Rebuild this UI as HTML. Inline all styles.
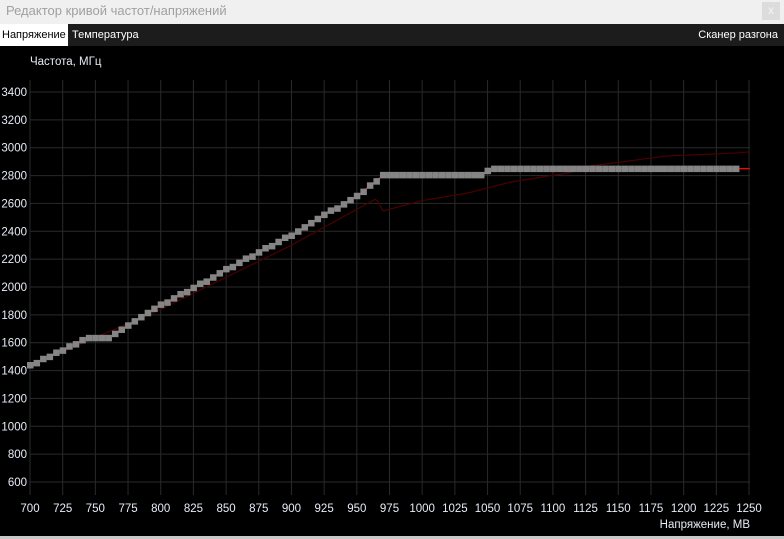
<!DOCTYPE html>
<html><head><meta charset="utf-8"><style>
body{margin:0;width:784px;height:539px;overflow:hidden;background:#000;font-family:"Liberation Sans",sans-serif;position:relative}
.title{position:absolute;left:0;top:0;width:784px;height:24px;background:#f0f0f0;color:#a0a0a0;font-size:13px;line-height:22px;padding-left:6px;box-sizing:border-box}
.close{position:absolute;left:762px;top:2px;width:18px;height:18px;background:#dcdcdc;color:#f4f4f4;font-size:12px;text-align:center;line-height:17px}
.tabs{position:absolute;left:0;top:24px;width:784px;height:22px;background:#1c1c1c;color:#fff;font-size:11px;line-height:22px}
.tab1{position:absolute;left:0;top:0;width:68px;height:22px;background:#fff;color:#000;padding-left:2px;box-sizing:border-box;white-space:nowrap;overflow:hidden}
.tab2{position:absolute;left:72px}
.tab3{position:absolute;right:6px}
svg{position:absolute;left:0;top:46px}
svg text{font-family:"Liberation Sans",sans-serif;font-size:11.5px;fill:#e6ecf5}
</style></head><body>
<div class="title">Редактор кривой частот/напряжений</div>
<div class="close">x</div>
<div class="tabs"><div class="tab1">Напряжение</div><div class="tab2">Температура</div><div class="tab3">Сканер разгона</div></div>
<svg id="s" width="784" height="493" viewBox="0 46 784 493">
<text x="30" y="65">Частота, МГц</text>
<text x="750" y="528" text-anchor="end">Напряжение, МВ</text>
<g id="g"></g>
</svg>
<script>
var g=document.getElementById('g'),h='';
function X(v){return 30+(v-700)*719/550}
function Y(f){return 92+(3400-f)/200*27.857}
for(var f=600;f<=3400;f+=200){var y=Y(f);h+='<line x1="30" x2="750" y1="'+y+'" y2="'+y+'" stroke="#2a2a2a"/>';h+='<text x="27" y="'+(y+4)+'" text-anchor="end">'+f+'</text>';}
for(var v=700;v<=1250;v+=25){var x=X(v);h+='<line x1="'+x+'" x2="'+x+'" y1="80" y2="495" stroke="#2a2a2a"/>';h+='<text x="'+x+'" y="512" text-anchor="middle">'+v+'</text>';}
function interp(p,v){for(var i=0;i<p.length-1;i++){if(v<=p[i+1][0]){var t=(v-p[i][0])/(p[i+1][0]-p[i][0]);return p[i][1]+t*(p[i+1][1]-p[i][1]);}}return p[p.length-1][1]}
var dk=[[700,1435],[800,1840],[900,2300],[965,2635],[970,2546],[1000,2620],[1035,2675],[1068,2754],[1112,2819],[1128,2869],[1152,2897],[1186,2940],[1240,2962],[1250,2970]];
var pd='';for(var v=700;v<=1250;v+=2){pd+=(v==700?'M':'L')+X(v).toFixed(1)+' '+Y(interp(dk,v)).toFixed(1)}
h+='<path d="'+pd+'" stroke="#4a0000" fill="none" stroke-width="1.2"/>';
var cp=[[700,1440],[745,1635],[760,1640],[800,1870],[900,2375],[950,2655],[970,2800],[1045,2805],[1050,2830],[1055,2850],[1250,2850]];
var pts=[];for(var v=700;v<=1240;v+=5){var f=Math.round(interp(cp,v)/15)*15;pts.push([X(v),Y(f)])}
var pl='';pts.forEach(function(p,i){pl+=(i?'L':'M')+p[0].toFixed(1)+' '+p[1].toFixed(1)});
h+='<path d="'+pl+'L750 '+Y(2850)+'" stroke="#ff0000" fill="none" stroke-width="1.3"/>';
pts.forEach(function(p){h+='<rect x="'+(p[0]-3)+'" y="'+(p[1]-3)+'" width="6.5" height="6.5" fill="#858585"/>'});
g.innerHTML=h;
</script>
<div style="position:absolute;left:0;top:536px;width:784px;height:3px;background:#c8c8c8"></div>
</body></html>
